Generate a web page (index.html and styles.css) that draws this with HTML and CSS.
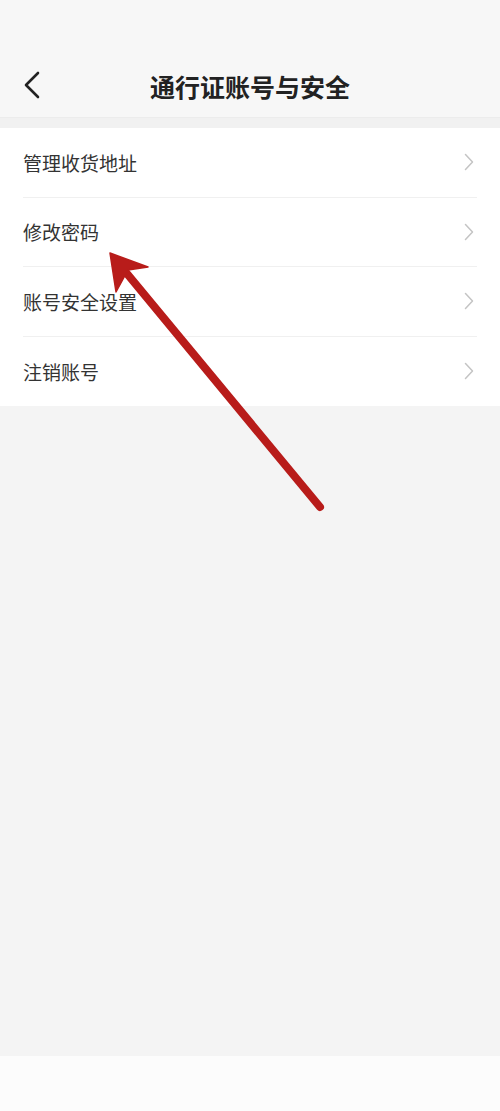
FILE: index.html
```html
<!DOCTYPE html>
<html lang="zh-CN">
<head>
<meta charset="utf-8">
<link rel="stylesheet" href="styles.css">
</head>
<body>
<div class="page">
  <header class="topbar">
    <div class="nav">
      <span class="back">
        <svg width="20" height="28" viewBox="0 0 20 28"><path d="M16 2 L4 14 L16 26" fill="none" stroke="#222" stroke-width="2.6" stroke-linecap="round" stroke-linejoin="round"/></svg>
      </span>
      <h1 class="title">通行证账号与安全</h1>
    </div>
  </header>
  <div class="gap"></div>
  <ul class="list">
    <li class="row"><span class="label">管理收货地址</span><span class="chev"><svg width="10" height="18" viewBox="0 0 10 18"><path d="M1.5 1.5 L8.5 9 L1.5 16.5" fill="none" stroke="#c4c4c4" stroke-width="1.5" stroke-linecap="round" stroke-linejoin="round"/></svg></span></li>
    <li class="row"><span class="label">修改密码</span><span class="chev"><svg width="10" height="18" viewBox="0 0 10 18"><path d="M1.5 1.5 L8.5 9 L1.5 16.5" fill="none" stroke="#c4c4c4" stroke-width="1.5" stroke-linecap="round" stroke-linejoin="round"/></svg></span></li>
    <li class="row"><span class="label">账号安全设置</span><span class="chev"><svg width="10" height="18" viewBox="0 0 10 18"><path d="M1.5 1.5 L8.5 9 L1.5 16.5" fill="none" stroke="#c4c4c4" stroke-width="1.5" stroke-linecap="round" stroke-linejoin="round"/></svg></span></li>
    <li class="row last"><span class="label">注销账号</span><span class="chev"><svg width="10" height="18" viewBox="0 0 10 18"><path d="M1.5 1.5 L8.5 9 L1.5 16.5" fill="none" stroke="#c4c4c4" stroke-width="1.5" stroke-linecap="round" stroke-linejoin="round"/></svg></span></li>
  </ul>
  <div class="filler"></div>
  <div class="bottombar"></div>
  <svg class="arrow" width="500" height="1111" viewBox="0 0 500 1111">
    <line x1="320" y1="507" x2="124" y2="270" stroke="#b81c1a" stroke-width="8" stroke-linecap="round"/>
    <path d="M110 253 L148 267 L128 270 L116 292 Z" fill="#b81c1a" stroke="#b81c1a" stroke-width="1.5" stroke-linejoin="round"/>
  </svg>
</div>
</body>
</html>
```
FILE: styles.css
```css
* { box-sizing: border-box; }
html, body { margin: 0; padding: 0; }
body {
  width: 500px;
  height: 1111px;
  overflow: hidden;
  background: #f4f4f4;
  font-family: "Noto Sans CJK SC", "Noto Sans", sans-serif;
}
.page {
  position: relative;
  width: 500px;
  height: 1111px;
  display: flex;
  flex-direction: column;
}
.topbar {
  height: 117px;
  background: #f7f7f7;
  display: flex;
  align-items: flex-end;
}
.nav {
  position: relative;
  height: 60px;
  width: 100%;
  display: flex;
  align-items: center;
  justify-content: center;
  padding-bottom: 2px;
}
.back {
  position: absolute;
  left: 22px;
  top: 14px;
  display: flex;
}
.title {
  margin: 0;
  font-size: 25px;
  font-weight: 700;
  color: #222;
  line-height: 1;
}
.gap {
  height: 11px;
  background: #f1f1f1;
  border-top: 1px solid #ececec;
}
.list {
  list-style: none;
  margin: 0;
  padding: 0 0 0 23px;
  background: #fff;
}
.row {
  height: 69.5px;
  display: flex;
  align-items: center;
  justify-content: space-between;
  border-bottom: 1px solid #f0f0f0;
  margin-right: 23px;
  padding-right: 3px;
}
.row.last { border-bottom: none; }
.label {
  font-size: 19px;
  color: #333;
  line-height: 1;
}
.chev { display: flex; }
.filler {
  flex: 1;
  background: #f4f4f4;
}
.bottombar {
  height: 55px;
  background: #fcfcfc;
}
.arrow {
  position: absolute;
  left: 0;
  top: 0;
  pointer-events: none;
}
```
